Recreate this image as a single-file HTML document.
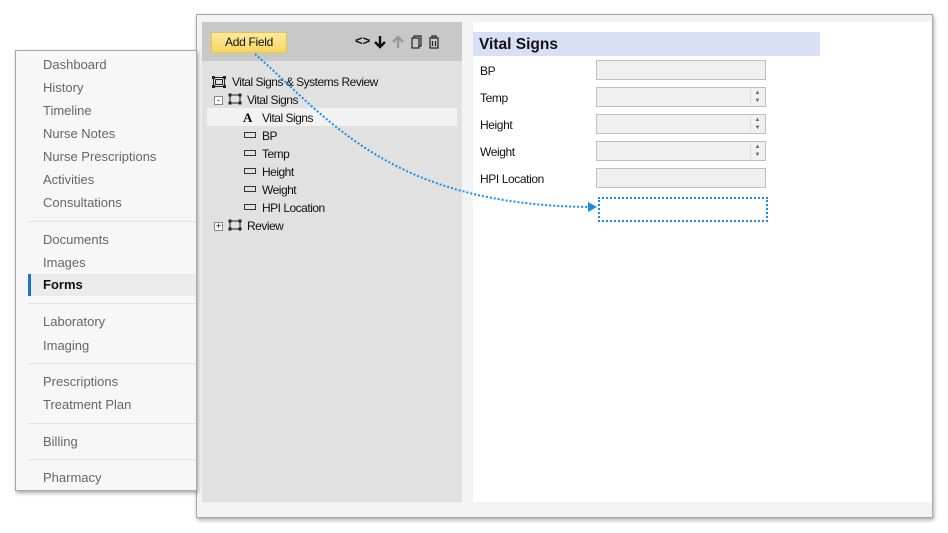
<!DOCTYPE html>
<html><head><style>
*{margin:0;padding:0;box-sizing:border-box}
body{width:948px;height:533px;background:#fff;position:relative;overflow:hidden;font-family:"Liberation Sans",Arial,sans-serif}
.abs{position:absolute}
#nav{left:15px;top:50px;width:182px;height:441px;background:#f7f7f7;border:1px solid #a8a8a8;box-shadow:1px 2px 4px rgba(0,0,0,.35);z-index:5}
.ni{position:absolute;left:27px;font-size:13px;color:#666;white-space:nowrap}
.sep{position:absolute;left:12px;width:168px;height:1px;background:#e2e2e2}
#win{left:196px;top:14px;width:737px;height:504px;background:#f3f3f3;border:1px solid #a8a8a8;box-shadow:1px 2px 4px rgba(0,0,0,.35)}
.tr{position:absolute;font-size:12px;color:#111;white-space:nowrap;letter-spacing:-.5px}
.lab{position:absolute;left:480px;font-size:12px;color:#111;letter-spacing:-.4px}
.inp{position:absolute;left:596px;width:170px;height:20px;background:#f0f0f0;border:1px solid #bdbdbd}
.sp{position:absolute;right:1px;top:1px;width:14px;height:16px;font-size:6px;color:#666;text-align:center;line-height:8px;border-left:1px solid #ddd}
.fi{position:absolute;width:12px;height:6px;border:1px solid #333}
</style></head><body>
<div id="nav" class="abs">
<div class="ni" style="top:6px">Dashboard</div>
<div class="ni" style="top:29px">History</div>
<div class="ni" style="top:52px">Timeline</div>
<div class="ni" style="top:75px">Nurse Notes</div>
<div class="ni" style="top:98px">Nurse Prescriptions</div>
<div class="ni" style="top:121px">Activities</div>
<div class="ni" style="top:144px">Consultations</div>
<div class="sep" style="top:170px"></div>
<div class="ni" style="top:181px">Documents</div>
<div class="ni" style="top:204px">Images</div>
<div class="abs" style="left:12px;top:223px;width:168px;height:22px;background:#ebebeb;border-left:3px solid #1a73d9"></div>
<div class="ni" style="top:226px;color:#111;font-weight:bold">Forms</div>
<div class="sep" style="top:252px"></div>
<div class="ni" style="top:263px">Laboratory</div>
<div class="ni" style="top:287px">Imaging</div>
<div class="sep" style="top:312px"></div>
<div class="ni" style="top:323px">Prescriptions</div>
<div class="ni" style="top:346px">Treatment Plan</div>
<div class="sep" style="top:372px"></div>
<div class="ni" style="top:383px">Billing</div>
<div class="sep" style="top:408px"></div>
<div class="ni" style="top:419px">Pharmacy</div>
</div>
<div id="win" class="abs"></div>
<div class="abs" style="left:202px;top:22px;width:260px;height:480px;background:#e1e1e1"></div>
<div class="abs" style="left:202px;top:22px;width:260px;height:39px;background:#c8c8c8"></div>
<div class="abs" style="left:211px;top:32px;width:76px;height:21px;background:linear-gradient(#fdeaa0,#f7d65e);border:1px solid #e8c34a;font-size:12px;text-align:center;line-height:19px;color:#111;letter-spacing:-.3px">Add Field</div>
<div class="abs" style="left:355px;top:33px;font-size:13px;font-weight:bold;color:#111">&lt;&gt;</div>
<svg class="abs" style="left:372px;top:34px" width="76" height="16">
<path d="M8 2v11M3 8l5 5 5-5" stroke="#111" stroke-width="2.4" fill="none"/>
<path d="M26 14V3M21 8l5-5 5 5" stroke="#999" stroke-width="2.4" fill="none"/>
<rect x="40" y="4" width="7" height="10" fill="none" stroke="#222" stroke-width="1.2"/><path d="M42 4V2h7v10h-2" fill="none" stroke="#222" stroke-width="1.2"/>
<path d="M57 4h10M60 4V2h4v2M58 5v9h8V5M60.5 7v5M63.5 7v5" fill="none" stroke="#222" stroke-width="1.2"/>
</svg>
<div class="abs" style="left:207px;top:108px;width:250px;height:18px;background:#f2f2f2"></div>
<svg class="abs" style="left:211px;top:75px" width="16" height="14"><rect x="2.5" y="2.5" width="11" height="9" fill="none" stroke="#222"/><rect x="4.5" y="4.5" width="7" height="5" fill="none" stroke="#222"/><g fill="#222"><rect x="1" y="1" width="3" height="3"/><rect x="12" y="1" width="3" height="3"/><rect x="1" y="10" width="3" height="3"/><rect x="12" y="10" width="3" height="3"/></g></svg>
<div class="tr" style="left:232px;top:75px">Vital Signs &amp; Systems Review</div>
<div class="abs" style="left:214px;top:96px;width:9px;height:9px;border:1px solid #888;background:#fff;font-size:9px;line-height:6px;text-align:center">-</div>
<svg class="abs" style="left:228px;top:93px" width="14" height="12"><rect x="2" y="2" width="10" height="8" fill="none" stroke="#222"/><g fill="#222"><rect x="0.5" y="0.5" width="3" height="3"/><rect x="10.5" y="0.5" width="3" height="3"/><rect x="0.5" y="8.5" width="3" height="3"/><rect x="10.5" y="8.5" width="3" height="3"/></g></svg>
<div class="tr" style="left:247px;top:93px">Vital Signs</div>
<div class="abs" style="left:243px;top:110px;font-family:'Liberation Serif',serif;font-weight:bold;font-size:13px">A</div>
<div class="tr" style="left:262px;top:111px">Vital Signs</div>
<div class="fi" style="left:244px;top:132px"></div><div class="tr" style="left:262px;top:129px">BP</div>
<div class="fi" style="left:244px;top:150px"></div><div class="tr" style="left:262px;top:147px">Temp</div>
<div class="fi" style="left:244px;top:168px"></div><div class="tr" style="left:262px;top:165px">Height</div>
<div class="fi" style="left:244px;top:186px"></div><div class="tr" style="left:262px;top:183px">Weight</div>
<div class="fi" style="left:244px;top:204px"></div><div class="tr" style="left:262px;top:201px">HPI Location</div>
<div class="abs" style="left:214px;top:222px;width:9px;height:9px;border:1px solid #888;background:#fff;font-size:9px;line-height:7px;text-align:center">+</div>
<svg class="abs" style="left:228px;top:219px" width="14" height="12"><rect x="2" y="2" width="10" height="8" fill="none" stroke="#222"/><g fill="#222"><rect x="0.5" y="0.5" width="3" height="3"/><rect x="10.5" y="0.5" width="3" height="3"/><rect x="0.5" y="8.5" width="3" height="3"/><rect x="10.5" y="8.5" width="3" height="3"/></g></svg>
<div class="tr" style="left:247px;top:219px">Review</div>
<div class="abs" style="left:473px;top:22px;width:459px;height:480px;background:#fff"></div>
<div class="abs" style="left:473px;top:32px;width:347px;height:24px;background:#d8e0f6;font-weight:bold;font-size:15.5px;color:#111;padding:4px 0 0 6px">Vital Signs</div>
<div class="lab" style="top:64px">BP</div><div class="inp" style="top:60px"></div>
<div class="lab" style="top:91px">Temp</div><div class="inp" style="top:87px"><div class="sp">▲<br>▼</div></div>
<div class="lab" style="top:118px">Height</div><div class="inp" style="top:114px"><div class="sp">▲<br>▼</div></div>
<div class="lab" style="top:145px">Weight</div><div class="inp" style="top:141px"><div class="sp">▲<br>▼</div></div>
<div class="lab" style="top:172px">HPI Location</div><div class="inp" style="top:168px"></div>
<div class="abs" style="left:598px;top:197px;width:170px;height:25px;border:2px dotted #1a8ce6"></div>
<svg class="abs" style="left:0;top:0;z-index:6" width="948" height="533">
<path d="M255 54 C330 120 390 205 590 207" fill="none" stroke="#1a8ce6" stroke-width="2" stroke-dasharray="2 2"/>
<path d="M588 202l9 5-9 5z" fill="#1a8ce6"/>
</svg>
</body></html>
